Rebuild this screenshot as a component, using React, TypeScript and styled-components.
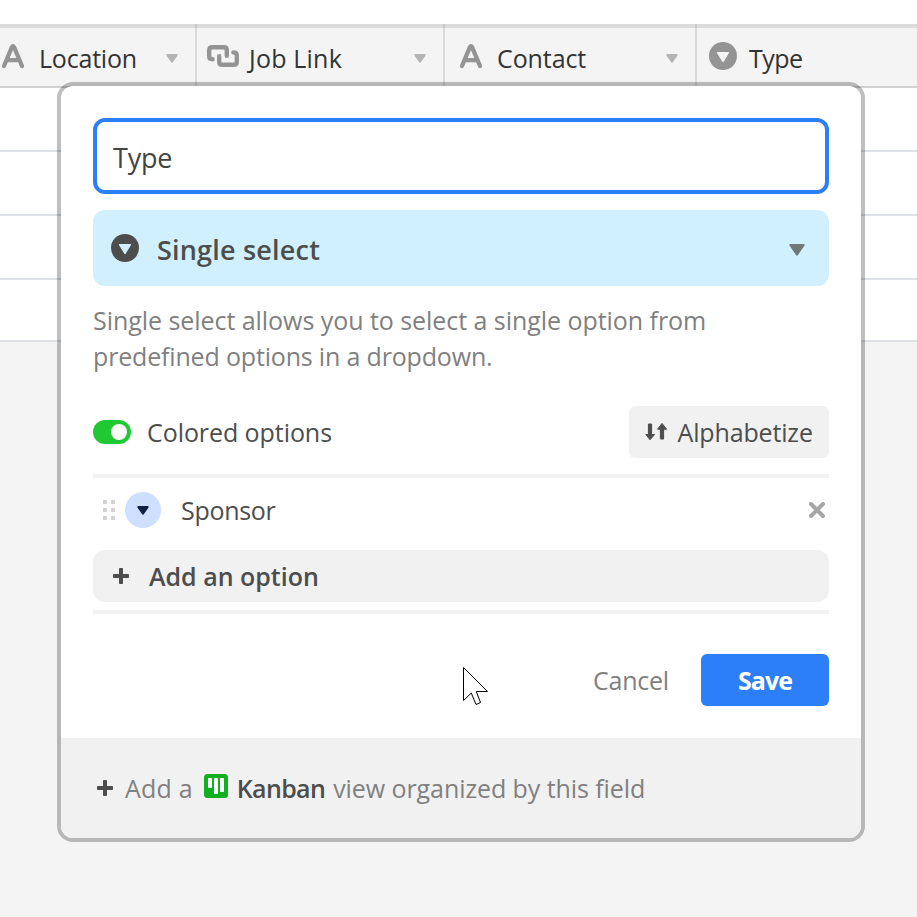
import React from 'react';
import styled, { createGlobalStyle } from 'styled-components';

const GlobalStyle = createGlobalStyle`
  * { box-sizing: border-box; }
  body {
    margin: 0;
    background: #f4f4f4;
    font-family: "Open Sans", "Noto Sans", sans-serif;
    font-size: 25px;
    color: #4d4d4d;
    overflow: hidden;
  }
  svg { display: block; flex: none; }
`;

const Screen = styled.main`
  position: relative;
  width: 917px;
  height: 917px;
  overflow: hidden;
`;

const TopStrip = styled.div`
  height: 24px;
  background: #fff;
`;

const HeaderRow = styled.div`
  display: grid;
  grid-template-columns: 197px 248px 252px 220px;
  height: 64px;
  border-bottom: 2px solid #d1d1d1;
  background: linear-gradient(#dcdcdc 4px, #f4f4f4 4px);
`;

const HeaderCell = styled.div<{ $inset: number; $last?: boolean }>`
  display: flex;
  align-items: center;
  padding: 4px 17px 0 ${(p) => p.$inset}px;
  border-right: ${(p) => (p.$last ? '0' : '2px')} solid rgba(120, 138, 150, 0.22);
`;

const HeaderLabel = styled.span<{ $gap: number; $spacing?: number }>`
  flex: 1;
  margin-left: ${(p) => p.$gap}px;
  padding-top: 2px;
  line-height: 36px;
  color: #333;
  letter-spacing: ${(p) => p.$spacing ?? 0}px;
  white-space: nowrap;
`;

const HeaderIcon = styled.div`
  display: flex;
  padding-bottom: 2px;
`;

const HeaderCaret = styled.div`
  padding-top: 2px;
`;

const GridRow = styled.div<{ $height: number }>`
  height: ${(p) => p.$height}px;
  background: #fff;
  border-bottom: 2px solid #dde1e5;
`;

const Dialog = styled.section`
  position: absolute;
  left: 61px;
  top: 86px;
  width: 800px;
  height: 752px;
  display: flex;
  flex-direction: column;
  background: #fff;
  border-radius: 12px;
  box-shadow: 0 0 0 4px rgba(0, 0, 0, 0.25);
  overflow: hidden;
`;

const DialogBody = styled.div`
  flex: 1;
  padding: 32px 32px 0;
`;

const NameInput = styled.div`
  display: flex;
  align-items: center;
  height: 76px;
  padding: 3px 16px 0;
  border: 4px solid #2d7ff9;
  border-radius: 12px;
  font-size: 27px;
  color: #444;
  letter-spacing: -0.2px;
`;

const TypeSelect = styled.div`
  display: flex;
  align-items: center;
  height: 76px;
  margin-top: 16px;
  padding: 0 24px 0 18px;
  border-radius: 12px;
  background: #d0f0fd;
`;

const TypeLabel = styled.span`
  flex: 1;
  margin-left: 18px;
  padding-top: 3px;
  font-size: 27px;
  font-weight: 600;
  letter-spacing: 0.2px;
`;

const TypeCaret = styled.div`
  padding-top: 4px;
`;

const Description = styled.p`
  margin: 16px 0 0;
  line-height: 36px;
  color: #808080;
  white-space: nowrap;
`;

const DescriptionLine = styled.span<{ $spacing: number }>`
  display: block;
  letter-spacing: ${(p) => p.$spacing}px;
`;

const OptionsBar = styled.div`
  display: flex;
  align-items: center;
  height: 52px;
  margin-top: 32px;
  line-height: 36px;
`;

const Toggle = styled.div`
  display: flex;
  justify-content: flex-end;
  width: 38px;
  height: 24px;
  padding: 4px;
  border-radius: 12px;
  background: #20c933;
`;

const Knob = styled.div`
  width: 16px;
  height: 16px;
  border-radius: 50%;
  background: #fff;
`;

const ToggleLabel = styled.span`
  flex: 1;
  margin-left: 16px;
  letter-spacing: -0.07px;
`;

const SortButton = styled.div`
  display: flex;
  align-items: center;
  width: 200px;
  height: 52px;
  padding-left: 16px;
  gap: 8.5px;
  border-radius: 6px;
  background: #f1f1f1;
  letter-spacing: -0.15px;
`;

const OptionList = styled.div`
  height: 140px;
  margin-top: 16px;
  border: solid #f1f1f1;
  border-width: 4px 0;
`;

const OptionRow = styled.div`
  display: flex;
  align-items: center;
  height: 64px;
  padding: 0 4px 0 10px;
  line-height: 36px;
`;

const ColorDot = styled.div`
  display: flex;
  align-items: center;
  justify-content: center;
  width: 36px;
  height: 36px;
  margin-left: 10px;
  border-radius: 50%;
  background: #cfdfff;
`;

const OptionName = styled.span`
  flex: 1;
  margin-left: 20px;
  letter-spacing: -0.3px;
`;

const AddOption = styled.div`
  display: flex;
  align-items: center;
  height: 52px;
  margin-top: 8px;
  padding-left: 20px;
  gap: 20px;
  border-radius: 12px;
  background: #f1f1f1;
  font-weight: 600;
  line-height: 36px;
`;

const Actions = styled.div`
  display: flex;
  justify-content: flex-end;
  align-items: center;
  gap: 32px;
  height: 52px;
  margin-top: 40px;
  line-height: 36px;
`;

const CancelButton = styled.span`
  color: #808080;
  letter-spacing: -0.2px;
`;

const SaveButton = styled.span`
  display: flex;
  align-items: center;
  justify-content: center;
  width: 128px;
  height: 52px;
  border-radius: 6px;
  background: #2d7ff9;
  color: #fff;
  font-weight: 700;
  letter-spacing: -0.95px;
`;

const DialogFooter = styled.footer`
  display: flex;
  align-items: center;
  height: 100px;
  padding-left: 36px;
  background: #f1f1f1;
  color: #808080;
  line-height: 36px;
  white-space: nowrap;
`;

const FooterText = styled.span<{ $gap: number; $spacing: number; $strong?: boolean }>`
  margin-left: ${(p) => p.$gap}px;
  letter-spacing: ${(p) => p.$spacing}px;
  font-weight: ${(p) => (p.$strong ? 600 : 400)};
  color: ${(p) => (p.$strong ? '#4d4d4d' : 'inherit')};
`;

const KanbanMark = styled.div`
  margin: 0 0 4px 11px;
`;

const Pointer = styled.svg`
  position: absolute;
  left: 462px;
  top: 666px;
`;

const TextIcon = () => (
  <svg width="24" height="26" viewBox="0 0 24 26">
    <path d="M3 23 L10.9 4.2 Q12 2.2 13.1 4.2 L21 23 M6.3 17.2 H17.7" fill="none" stroke="#949494" strokeWidth="4.3" strokeLinecap="round" strokeLinejoin="round" />
  </svg>
);

const LinkIcon = () => (
  <svg width="32" height="22" viewBox="0 0 32 22">
    <g fill="none" stroke="#949494" strokeWidth="4.4" strokeLinecap="round" strokeLinejoin="round">
      <path d="M5.6 14.2 Q2.2 14.2 2.2 11.2 V5.2 Q2.2 2.2 5.2 2.2 H16.8 Q19.8 2.2 19.8 5.2 V10.8" />
      <path d="M26.4 7.4 Q29.8 7.4 29.8 10.4 V16.8 Q29.8 19.8 26.8 19.8 H15.2 Q12.2 19.8 12.2 16.8 V11.2" />
    </g>
  </svg>
);

const Caret = ({ w, h, color }: { w: number; h: number; color: string }) => (
  <svg width={w} height={h} viewBox={`0 0 ${w} ${h}`}>
    <path
      d={`M1.3 1 H${w - 1.3} L${w / 2} ${h - 1.3} Z`}
      fill={color}
      stroke={color}
      strokeWidth="2"
      strokeLinejoin="round"
    />
  </svg>
);

const SelectIcon = ({ color, hole }: { color: string; hole: string }) => (
  <svg width="28" height="28" viewBox="0 0 28 28">
    <circle cx="14" cy="14" r="14" fill={color} />
    <path d="M8.5 10.6 H19.5 L14 19.6 Z" fill={hole} stroke={hole} strokeWidth="1.2" strokeLinejoin="round" />
  </svg>
);

const Plus = () => (
  <svg width="16" height="16" viewBox="0 0 16 16">
    <g fill="#4d4d4d">
      <rect x="6" y="0" width="4" height="16" rx="0.8" />
      <rect x="0" y="6" width="16" height="4" rx="0.8" />
    </g>
  </svg>
);

const SortArrows = () => (
  <svg width="24" height="20" viewBox="0 0 24 20">
    <g fill="#4d4d4d" stroke="#4d4d4d" strokeWidth="1" strokeLinejoin="round">
      <path d="M3.4 2 H6.6 V12.5 H9.6 L5 17.8 L0.8 12.5 H3.4 Z" />
      <path d="M15.4 17 H18.6 V7.2 H21.6 L17 1.4 L12.6 7.2 H15.4 Z" />
    </g>
  </svg>
);

const DragDots = () => (
  <svg width="12" height="20" viewBox="0 0 12 20">
    {[0, 8, 16].map((y) => (
      <g key={y} fill="#d2d2d2">
        <rect x="0" y={y} width="4" height="4" rx="0.8" />
        <rect x="8" y={y} width="4" height="4" rx="0.8" />
      </g>
    ))}
  </svg>
);

const Remove = () => (
  <svg width="16" height="16" viewBox="0 0 16 16">
    <path d="M2 2 L14 14 M14 2 L2 14" stroke="#a6a6a6" strokeWidth="4" strokeLinecap="round" />
  </svg>
);

const KanbanIcon = () => (
  <svg width="24" height="24" viewBox="0 0 24 24">
    <rect width="24" height="24" rx="3.5" fill="#11af22" />
    <g fill="#fff">
      <rect x="4" y="4" width="4" height="10" rx="0.8" />
      <rect x="10" y="4" width="4" height="16" rx="0.8" />
      <rect x="16" y="4" width="4" height="14" rx="0.8" />
    </g>
  </svg>
);

const ColumnCaret = () => (
  <HeaderCaret>
    <Caret w={12} h={9} color="#b4b4b4" />
  </HeaderCaret>
);

export default function App() {
  return (
    <Screen>
      <GlobalStyle />
      <TopStrip />
      <HeaderRow>
        <HeaderCell $inset={1}>
          <HeaderIcon><TextIcon /></HeaderIcon>
          <HeaderLabel $gap={14} $spacing={-0.2}>Location</HeaderLabel>
          <ColumnCaret />
        </HeaderCell>
        <HeaderCell $inset={10}>
          <HeaderIcon><LinkIcon /></HeaderIcon>
          <HeaderLabel $gap={10} $spacing={0.2}>Job Link</HeaderLabel>
          <ColumnCaret />
        </HeaderCell>
        <HeaderCell $inset={14}>
          <HeaderIcon><TextIcon /></HeaderIcon>
          <HeaderLabel $gap={14} $spacing={-0.1}>Contact</HeaderLabel>
          <ColumnCaret />
        </HeaderCell>
        <HeaderCell $inset={12} $last>
          <HeaderIcon><SelectIcon color="#949494" hole="#f4f4f4" /></HeaderIcon>
          <HeaderLabel $gap={12} $spacing={-0.55}>Type</HeaderLabel>
        </HeaderCell>
      </HeaderRow>
      <GridRow $height={64} />
      <GridRow $height={64} />
      <GridRow $height={64} />
      <GridRow $height={62} />

      <Dialog>
        <DialogBody>
          <NameInput>Type</NameInput>
          <TypeSelect>
            <SelectIcon color="#4d4d4d" hole="#d0f0fd" />
            <TypeLabel>Single select</TypeLabel>
            <TypeCaret>
              <Caret w={16} h={12} color="#6f777a" />
            </TypeCaret>
          </TypeSelect>
          <Description>
            <DescriptionLine $spacing={-0.05}>Single select allows you to select a single option from</DescriptionLine>
            <DescriptionLine $spacing={-0.17}>predefined options in a dropdown.</DescriptionLine>
          </Description>
          <OptionsBar>
            <Toggle><Knob /></Toggle>
            <ToggleLabel>Colored options</ToggleLabel>
            <SortButton><SortArrows />Alphabetize</SortButton>
          </OptionsBar>
          <OptionList>
            <OptionRow>
              <DragDots />
              <ColorDot><Caret w={12} h={9} color="#102046" /></ColorDot>
              <OptionName>Sponsor</OptionName>
              <Remove />
            </OptionRow>
            <AddOption><Plus />Add an option</AddOption>
          </OptionList>
          <Actions>
            <CancelButton>Cancel</CancelButton>
            <SaveButton>Save</SaveButton>
          </Actions>
        </DialogBody>
        <DialogFooter>
          <Plus />
          <FooterText $gap={12} $spacing={0.2}>Add a</FooterText>
          <KanbanMark><KanbanIcon /></KanbanMark>
          <FooterText $gap={9} $spacing={-0.65} $strong>Kanban</FooterText>
          <FooterText $gap={8} $spacing={-0.08}>view organized by this field</FooterText>
        </DialogFooter>
      </Dialog>

      <Pointer width="28" height="42" viewBox="0 0 28 42">
        <path
          d="M1.5 1.5 V34.5 L9.3 27 L14 38.5 L18.5 36.5 L14.3 25.5 H25.5 Z"
          fill="#fff"
          stroke="#000"
          strokeWidth="1"
        />
      </Pointer>
    </Screen>
  );
}
